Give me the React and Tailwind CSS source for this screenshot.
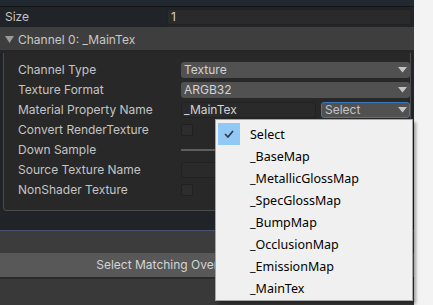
import React from 'react';

const rows = [
  { label: 'Channel Type', kind: 'dropdown', value: 'Texture' },
  { label: 'Texture Format', kind: 'dropdown', value: 'ARGB32' },
  { label: 'Material Property Name', kind: 'property', value: '_MainTex' },
  { label: 'Convert RenderTexture', kind: 'checkbox' },
  { label: 'Down Sample', kind: 'slider' },
  { label: 'Source Texture Name', kind: 'field' },
  { label: 'NonShader Texture', kind: 'checkbox' },
];

const options = ['Select', '_BaseMap', '_MetallicGlossMap', '_SpecGlossMap', '_BumpMap', '_OcclusionMap', '_EmissionMap', '_MainTex'];

const Arrow = () => (
  <svg width="9" height="6" viewBox="0 0 9 6" className="shrink-0">
    <path d="M0 0 H9 L4.5 5.5 Z" fill="#c4c4c4" />
  </svg>
);

const Field = ({ kind, value }) => {
  if (kind === 'dropdown') {
    return (
      <div className="flex-1 h-[16px] bg-[#515151] rounded-[3px] flex items-center justify-between pl-[3px] pr-[3px] text-[#d2d2d2]">
        <span>{value}</span>
        <Arrow />
      </div>
    );
  }
  if (kind === 'property') {
    return (
      <div className="flex-1 flex gap-[5px]">
        <div className="w-[135px] h-[16px] bg-[#2a2a2a] border border-[#212121] rounded-[3px] flex items-center px-[2px] text-[#d2d2d2]">
          {value}
        </div>
        <div className="flex-1 h-[16px] bg-[#515151] border border-[#3a79bb] rounded-[3px] flex items-center justify-between pl-[3px] pr-[2px] text-[#c4c4c4]">
          <span>Select</span>
          <Arrow />
        </div>
      </div>
    );
  }
  if (kind === 'checkbox') {
    return <div className="w-[12px] h-[12px] bg-[#2d2d2d] border border-[#202020] rounded-[2px]" />;
  }
  if (kind === 'slider') {
    return (
      <div className="flex-1 flex items-center">
        <div className="w-[60px] h-[2px] bg-[#5e5e5e]" />
      </div>
    );
  }
  return <div className="flex-1 h-[16px] bg-[#2a2a2a] border border-[#212121] rounded-[3px]" />;
};

export default function App() {
  return (
    <div className="relative w-[433px] h-[305px] overflow-hidden flex text-[12px] leading-none" style={{ fontFamily: 'Inter, "Noto Sans", sans-serif' }}>
      <div className="w-[414px] flex flex-col bg-[#202328] text-[#c4c4c4]">
        <div className="h-[7px] bg-[#22282f] border-b border-[#151515]" />
        <div className="h-[19px] flex items-center">
          <span className="w-[167px] pl-[5px]">Size</span>
          <div className="flex-1 h-[16px] bg-[#2a2a2a] border border-[#212121] rounded-[2px] flex items-center px-[3px] text-[#d2d2d2] mr-[3px]">1</div>
        </div>
        <div className="h-[21px] mt-[1px] bg-[#3e3e3e] flex items-center gap-[4px] pl-[5px] pt-[2px] border-b-[3px] border-[#262626] box-content">
          <svg width="9" height="7" viewBox="0 0 9 7">
            <path d="M0 0 H9 L4.5 7 Z" fill="#9a9a9a" />
          </svg>
          <span className="text-[#c8c8c8]">Channel 0: _MainTex</span>
        </div>
        <div className="mx-[3px] h-[158px] bg-[#282828] border border-[#4b4b4b] border-t-0 rounded-b-[4px] flex flex-col pt-[9px] gap-[4px]">
          {rows.map((r) => (
            <div key={r.label} className="h-[16px] flex items-center">
              <span className="w-[177px] pl-[14px]">{r.label}</span>
              <Field kind={r.kind} value={r.value} />
            </div>
          ))}
        </div>
        <div className="min-h-[19px]" />
        <div className="h-[1px] bg-[#4b5572]" />
        <div className="h-[22px] bg-[#3c3c3c]" />
        <div className="h-[24px] bg-[#585858] border-b-[2px] border-[#2a2a2a] box-content flex items-center justify-center text-[#d4d4d4]">
          Select Matching Override Texture Slots
        </div>
        <div className="flex-1 bg-[#393939]" />
      </div>
      <div className="flex-1 bg-[#f3f3f3]" />

      <div
        className="absolute left-[215px] top-[119px] w-[198px] h-[182px] bg-[#f0f0f0] border border-[#a7a7a7] pt-[3px] flex flex-col shadow-[3px_3px_3px_rgba(0,0,0,0.35)] text-[12.5px] text-black"
        style={{ fontFamily: '"Noto Sans", sans-serif' }}
      >
        {options.map((o, i) => (
          <div key={o} className="h-[22px] flex items-center">
            <div className={`w-[22px] h-[22px] ml-[2px] flex items-center justify-center ${i === 0 ? 'bg-[#90c8f6]' : ''}`}>
              {i === 0 && (
                <svg width="10" height="8" viewBox="0 0 10 8">
                  <path d="M1 4 L4 7 L9 1" fill="none" stroke="#333" strokeWidth="1.6" />
                </svg>
              )}
            </div>
            <span className="ml-[10px] pt-[2px]">{o}</span>
          </div>
        ))}
      </div>
    </div>
  );
}
